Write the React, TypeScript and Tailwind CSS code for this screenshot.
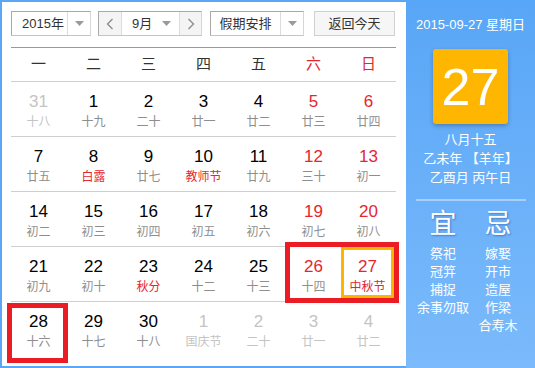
import React from "react";

type Day = { n: number; sub: string; muted?: boolean; redNum?: boolean; redSub?: boolean; today?: boolean };

const weeks: Day[][] = [
  [
    { n: 31, sub: "十八", muted: true },
    { n: 1, sub: "十九" },
    { n: 2, sub: "二十" },
    { n: 3, sub: "廿一" },
    { n: 4, sub: "廿二" },
    { n: 5, sub: "廿三", redNum: true },
    { n: 6, sub: "廿四", redNum: true },
  ],
  [
    { n: 7, sub: "廿五" },
    { n: 8, sub: "白露", redSub: true },
    { n: 9, sub: "廿七" },
    { n: 10, sub: "教师节", redSub: true },
    { n: 11, sub: "廿九" },
    { n: 12, sub: "三十", redNum: true },
    { n: 13, sub: "初一", redNum: true },
  ],
  [
    { n: 14, sub: "初二" },
    { n: 15, sub: "初三" },
    { n: 16, sub: "初四" },
    { n: 17, sub: "初五" },
    { n: 18, sub: "初六" },
    { n: 19, sub: "初七", redNum: true },
    { n: 20, sub: "初八", redNum: true },
  ],
  [
    { n: 21, sub: "初九" },
    { n: 22, sub: "初十" },
    { n: 23, sub: "秋分", redSub: true },
    { n: 24, sub: "十二" },
    { n: 25, sub: "十三" },
    { n: 26, sub: "十四", redNum: true },
    { n: 27, sub: "中秋节", redNum: true, redSub: true, today: true },
  ],
  [
    { n: 28, sub: "十六" },
    { n: 29, sub: "十七" },
    { n: 30, sub: "十八" },
    { n: 1, sub: "国庆节", muted: true },
    { n: 2, sub: "二十", muted: true },
    { n: 3, sub: "廿一", muted: true },
    { n: 4, sub: "廿二", muted: true },
  ],
];

const weekdays = ["一", "二", "三", "四", "五", "六", "日"];

const Caret = () => (
  <svg width="9" height="5" viewBox="0 0 9 5">
    <polygon points="0,0 9,0 4.5,5" fill="#9a9a9a" />
  </svg>
);

const Chevron = ({ dir }: { dir: "l" | "r" }) => (
  <svg width="8" height="12" viewBox="0 0 8 12">
    <polyline
      points={dir === "l" ? "6.5,1 1.5,6 6.5,11" : "1.5,1 6.5,6 1.5,11"}
      fill="none"
      stroke="#8a8a8a"
      strokeWidth="1.3"
    />
  </svg>
);

const DayCell = ({ d }: { d: Day }) => {
  const numColor = d.muted ? "text-[#c4c4c4]" : d.redNum ? "text-[#e5262f]" : "text-black";
  const subColor = d.muted ? "text-[#c4c4c4]" : d.redSub ? "text-[#e5262f]" : "text-[#8e8e8e]";
  return (
    <div className="h-[54px]">
      <div
        className={
          d.today
            ? "w-[53px] h-[51px] border-[3px] border-[#ffb400] flex flex-col items-center pt-[7px]"
            : "w-full h-full flex flex-col items-center pt-[10px]"
        }
      >
        <span className={`text-[17px] leading-[20px] ${numColor}`}>{d.n}</span>
        <span className={`text-[12px] leading-[18px] mt-px ${subColor}`}>{d.sub}</span>
      </div>
    </div>
  );
};

export default function App() {
  return (
    <div
      className="relative w-[535px] h-[368px] flex overflow-hidden"
      style={{ fontFamily: '"Liberation Sans", "Noto Sans CJK SC", sans-serif' }}
    >
      {/* calendar */}
      <div className="w-[406px] h-full bg-white border-l-2 border-t-2 border-b-2 border-[#5aa7f6] pl-[9px] pt-[9px]">
        {/* toolbar */}
        <div className="flex items-center h-[25px] text-[13px] text-[#333]">
          <div className="flex w-[80px] h-[25px] border border-[#a9a9a9] border-r-[#d6d6d6] border-b-[#c4c4c4]">
            <div className="w-[55px] flex items-center pl-[10px]">2015年</div>
            <div className="flex-1 flex items-center justify-center border-l border-[#dcdcdc]">
              <Caret />
            </div>
          </div>

          <div className="ml-[7px] flex w-[104px] h-[25px] border border-[#a9a9a9] border-r-[#d6d6d6] border-b-[#c4c4c4]">
            <div className="w-[22px] flex items-center justify-center bg-[#f4f4f4]">
              <Chevron dir="l" />
            </div>
            <div className="w-[59px] flex items-center border-l border-r border-[#dcdcdc] pl-[10px]">
              <span>9月</span>
              <span className="ml-auto mr-[8px] flex">
                <Caret />
              </span>
            </div>
            <div className="flex-1 flex items-center justify-center bg-[#f4f4f4]">
              <Chevron dir="r" />
            </div>
          </div>

          <div className="ml-[8px] flex w-[94px] h-[25px] border border-[#a9a9a9] border-r-[#d6d6d6] border-b-[#c4c4c4]">
            <div className="w-[69px] flex items-center justify-center">假期安排</div>
            <div className="flex-1 flex items-center justify-center border-l border-[#dcdcdc]">
              <Caret />
            </div>
          </div>

          <div className="ml-[10px] w-[81px] h-[25px] flex items-center justify-center border border-[#d0d0d0] bg-[#f6f6f6]">
            返回今天
          </div>
        </div>

        <div className="mt-[11px] w-[385px] h-px bg-[#5aa7f6]" />

        {/* weekday header */}
        <div className="grid grid-cols-7 w-[385px] h-[33px] text-[15px] text-[#333]">
          {weekdays.map((w, i) => (
            <div key={w} className={`flex items-center justify-center ${i > 4 ? "text-[#e5262f]" : ""}`}>
              {w}
            </div>
          ))}
        </div>

        {/* days */}
        <div className="w-[385px]">
          {weeks.map((row, ri) => (
            <div key={ri} className={`grid grid-cols-7 ${ri < weeks.length ? "border-t border-[#cfcfcf]" : ""} ${ri === weeks.length - 1 ? "border-t-[#cfcfcf]" : ""}`}>
              {row.map((d, ci) => (
                <DayCell key={ci} d={d} />
              ))}
            </div>
          ))}
        </div>
      </div>

      {/* side panel */}
      <div className="flex-1 h-full bg-gradient-to-b from-[#58a6f7] to-[#7bbafb] text-white flex flex-col items-center">
        <div className="mt-[17px] text-[13px] leading-[16px]">2015-09-27 星期日</div>
        <div className="mt-[16px] w-[75px] h-[75px] rounded-[3px] bg-[#ffb600] shadow-[0_2px_4px_rgba(0,0,0,0.25)] flex items-center justify-center">
          <span className="text-[52px] leading-none" style={{ fontFamily: '"Liberation Sans", sans-serif' }}>
            27
          </span>
        </div>
        <div className="mt-[6px] text-[13px] leading-[19px] flex flex-col items-center">
          <span>八月十五</span>
          <span>乙未年 【羊年】</span>
          <span>乙酉月 丙午日</span>
        </div>
        <div className="mt-[12px] w-[110px] h-[2px] bg-[#a6d0fb]" />
        <div className="mt-[8px] w-[110px] grid grid-cols-2">
          <div className="flex flex-col items-center">
            <span className="text-[27px] leading-[30px] [text-shadow:1px_1px_2px_rgba(20,60,140,0.45)]">宜</span>
            <div className="mt-[6px] flex flex-col items-center text-[13px] leading-[18px] whitespace-nowrap">
              <span>祭祀</span>
              <span>冠笄</span>
              <span>捕捉</span>
              <span>余事勿取</span>
            </div>
          </div>
          <div className="flex flex-col items-center">
            <span className="text-[27px] leading-[30px] [text-shadow:1px_1px_2px_rgba(20,60,140,0.45)]">忌</span>
            <div className="mt-[6px] flex flex-col items-center text-[13px] leading-[18px] whitespace-nowrap">
              <span>嫁娶</span>
              <span>开市</span>
              <span>造屋</span>
              <span>作梁</span>
              <span>合寿木</span>
            </div>
          </div>
        </div>
      </div>

      {/* red annotation boxes */}
      <div className="absolute left-[285px] top-[242px] w-[114px] h-[61px] border-[5px] border-[#ec1c24]" />
      <div className="absolute left-[7px] top-[303px] w-[61px] h-[60px] border-[5px] border-[#ec1c24]" />
    </div>
  );
}
